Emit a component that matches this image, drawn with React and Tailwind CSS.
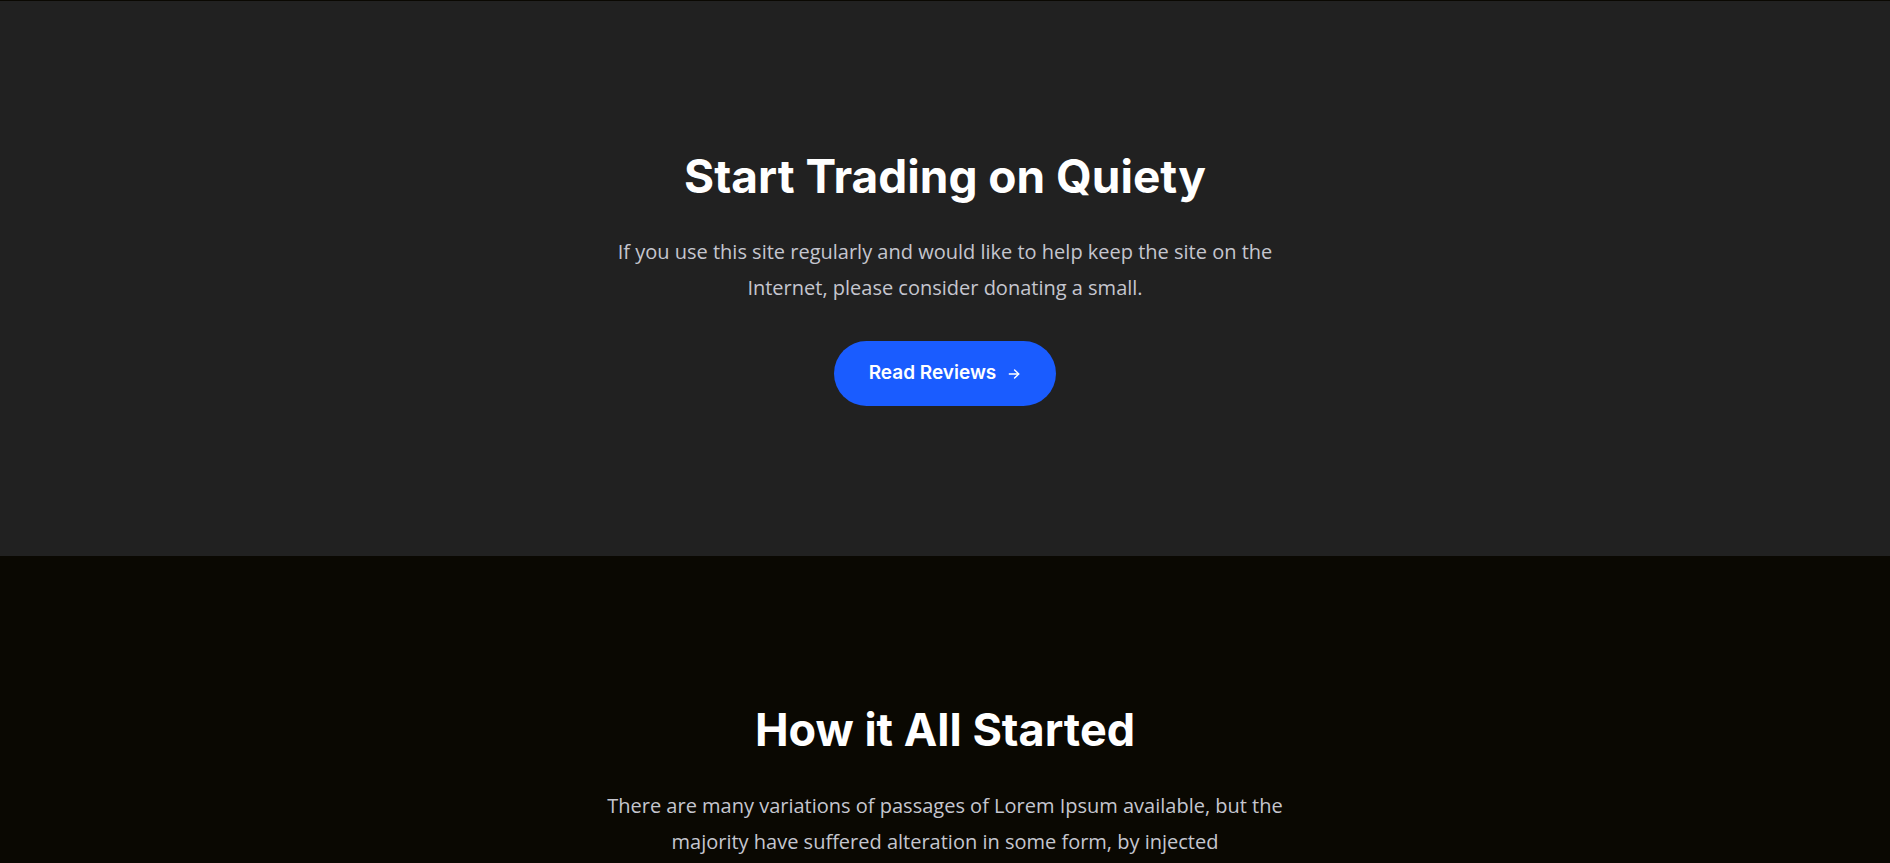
import React from 'react';

const ArrowRight = () => (
  <svg width="14" height="14" viewBox="0 0 24 24" fill="none" stroke="currentColor" strokeWidth="2.4" strokeLinecap="round" strokeLinejoin="round">
    <path d="M4 12h16" />
    <path d="M13 5l7 7-7 7" />
  </svg>
);

const heading = { fontFamily: 'Inter, "Noto Sans", sans-serif' };
const body = { fontFamily: '"Open Sans", "Noto Sans", sans-serif' };

const App = () => {
  return (
    <div className="min-h-screen bg-[#0a0802]">
      {/* CTA */}
      <section className="border-t border-[#0a0802] bg-[#212121] pt-[147px] pb-[150px]">
        <div className="flex flex-col items-center text-center">
          <h2 style={heading} className="text-[46px] leading-[56px] font-bold text-white">
            Start Trading on Quiety
          </h2>
          <p style={body} className="mt-[30px] max-w-[700px] text-[20px] leading-[36px] text-[#c5c6cf]">
            If you use this site regularly and would like to help keep the site on the Internet, please consider donating a small.
          </p>
          <button
            style={heading}
            className="mt-[35px] flex h-[65px] items-center gap-[11px] rounded-full bg-[#1a5cff] px-[35px] text-[19px] font-semibold text-white"
          >
            Read Reviews
            <ArrowRight />
          </button>
        </div>
      </section>

      {/* Story */}
      <section className="bg-[#0a0802] pt-[146px] pb-[80px]">
        <div className="flex flex-col items-center text-center">
          <h2 style={heading} className="text-[45px] leading-[56px] font-bold text-white">
            How it All Started
          </h2>
          <p style={body} className="mt-[30px] max-w-[700px] text-[20px] leading-[36px] text-[#c5c6cf]">
            There are many variations of passages of Lorem Ipsum available, but the majority have suffered alteration in some form, by injected
            <br />
            humour, or randomised words which don't look even slightly believable.
          </p>
        </div>
      </section>
    </div>
  );
};

export default App;
